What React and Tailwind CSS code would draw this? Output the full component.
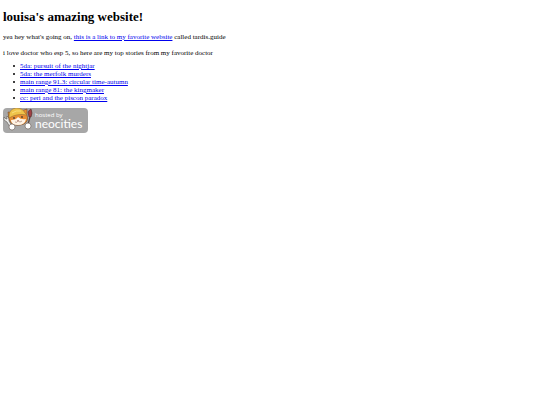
function NeocitiesBadge() {
  return (
    <svg viewBox="0 0 85 25" className="h-[25px] w-[85px]" role="img" aria-label="hosted by neocities">
      <rect width="85" height="25" rx="4" fill="#a7a7a7" />
      {/* wrench */}
      <path d="M1 9 L1 12 L4 14 L8 21 L10 20 L6 13 L6 10 L4 8 L4 11 L3 11 Z" fill="#eeeeec" stroke="#5f5b58" strokeWidth=".6" />
      {/* brush */}
      <path d="M24 20 L27 9" stroke="#594740" strokeWidth="1.2" />
      <path d="M26 9 L25 4 Q26 2 28 1 Q30 5 28 9 Z" fill="#a13f43" stroke="#4c302c" strokeWidth=".6" />
      {/* ears and head */}
      <path d="M6 11 L5 4 L10 5 L18 3 L24 1 L24 7 Q26 13 21 16 Q13 19 8 15 Z" fill="#e78d32" stroke="#73482a" strokeWidth=".6" />
      <path d="M15 9 Q13 12 8 12 Q8 17 15 17 Q22 17 23 11 Q18 12 15 9 Z" fill="#fff3e4" />
      {/* hard hat */}
      <path d="M6 8 Q6 1 13 0 Q20 0 22 5 L24 7 Q14 5 6 10 Z" fill="#efc34a" stroke="#8c672d" strokeWidth=".5" />
      <path d="M9 5 Q13 2 18 3" fill="none" stroke="#fae58a" strokeWidth=".8" />
      {/* face */}
      <path d="M11 9 V11 M19 8 V10" stroke="#403630" strokeWidth="1.2" />
      <path d="M14 12 L16 12 L15 13 Z" fill="#8c493c" />
      <path d="M12 14 Q14 15 15 13 Q17 15 19 13" fill="none" stroke="#8c5140" strokeWidth=".5" />
      {/* paws */}
      <circle cx="9" cy="19" r="3" fill="#fff" stroke="#655850" strokeWidth=".6" />
      <circle cx="25" cy="18" r="3" fill="#fff" stroke="#655850" strokeWidth=".6" />
      <text x="32" y="9" fontSize="6" fill="#fff" fontFamily="'Open Sans', sans-serif">hosted by</text>
      <text x="32" y="20" fontSize="12" fill="#fff" fontFamily="Lato, sans-serif">neocities</text>
    </svg>
  );
}

const stories = [
  "5da: pursuit of the nightjar",
  "5da: the merfolk murders",
  "main range 91.3: circular time-autumn",
  "main range 81: the kingmaker",
  "cc: peri and the piscon paradox",
];

export default function App() {
  return (
    <main className="flex min-h-screen flex-col items-start bg-white px-[3px] pt-[9px] font-['Liberation_Serif',serif] text-[7px] leading-[8px] text-black">
      <h1 className="text-[13px] leading-[16px] font-bold">louisa's amazing website!</h1>
      <p className="mt-[8px]">
        yea hey what's going on, <a href="#guide" className="text-[#0000ee] underline">this is a link to my favorite website</a> called tardis.guide
      </p>
      <p className="mt-[8px]">i love doctor who esp 5, so here are my top stories from my favorite doctor</p>
      <ul className="mt-[5px] pl-[10px]">
        {stories.map((story) => (
          <li key={story} className="flex items-center gap-[5px] before:size-[2px] before:rounded-full before:bg-black before:content-['']">
            <a href="#stories" className="text-[#0000ee] underline">{story}</a>
          </li>
        ))}
      </ul>
      <a href="#neocities" className="mt-[6px] block">
        <NeocitiesBadge />
      </a>
    </main>
  );
}
